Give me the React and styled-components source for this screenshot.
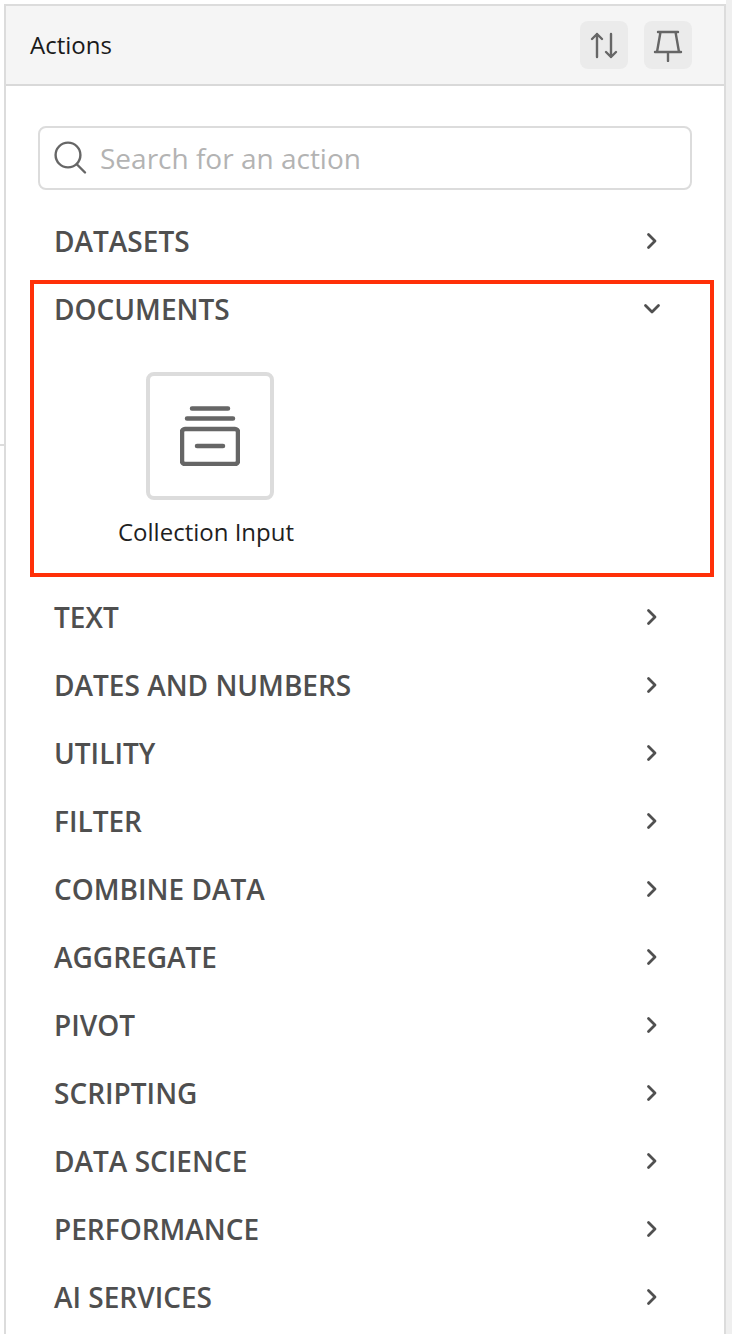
import React from 'react'
import styled, { createGlobalStyle } from 'styled-components'

const GlobalStyle = createGlobalStyle`
  html, body {
    margin: 0;
    padding: 0;
    background: #fff;
    font-family: "Open Sans", "Liberation Sans", sans-serif;
  }
`

const Page = styled.div`
  width: 732px;
  height: 1334px;
  display: flex;
  overflow: hidden;
`

const Gutter = styled.div`
  width: 4px;
  height: 444px;
  flex: none;
  border-bottom: 2px solid #dcdcdc;
`

const Panel = styled.aside`
  width: 718px;
  height: 1334px;
  margin-top: 4px;
  flex: none;
  border: 2px solid #dcdcdc;
  border-bottom: none;
  background: #fff;
`

const RightEdge = styled.div`
  flex: 1;
  background: #efefef;
`

const Header = styled.header`
  height: 78px;
  display: flex;
  align-items: center;
  padding: 0 32px 0 24px;
  background: #f5f5f5;
  border-bottom: 2px solid #d9d9d9;
`

const Title = styled.h1`
  margin: 0 0 2px;
  flex: 1;
  font-size: 24px;
  font-weight: 400;
  color: #1a1a1a;
`

const HeaderButtons = styled.div`
  display: flex;
  gap: 16px;
`

const IconButton = styled.button`
  width: 48px;
  height: 48px;
  padding: 0;
  display: flex;
  align-items: center;
  justify-content: center;
  border: none;
  border-radius: 8px;
  background: #ebebeb;
`

const Body = styled.div`
  padding-top: 40px;
`

const SearchBox = styled.label`
  height: 60px;
  margin: 0 32px;
  padding-left: 14px;
  display: flex;
  align-items: center;
  gap: 12px;
  border: 2px solid #dcdcdc;
  border-radius: 8px;
`

const SearchInput = styled.input`
  flex: 1;
  min-width: 0;
  border: none;
  outline: none;
  padding: 0;
  background: transparent;
  font-family: inherit;
  font-size: 28px;
  color: #333;

  &::placeholder {
    color: #b3b3b3;
    opacity: 1;
  }
`

const List = styled.div`
  padding-top: 17px;
`

const Row = styled.div`
  height: 68px;
  display: flex;
  align-items: center;
  justify-content: space-between;
  padding: 0 62px 0 48px;
`

const RowLabel = styled.span`
  font-size: 28px;
  font-weight: 600;
  color: #4f4f4f;
`

const Section = styled.section`
  position: relative;
  height: 308px;
`

const Highlight = styled.div`
  position: absolute;
  top: 5px;
  left: 24px;
  width: 684px;
  height: 297px;
  box-sizing: border-box;
  border: 4px solid #ff3008;
  pointer-events: none;
`

const Tile = styled.div`
  width: 176px;
  margin: 29px 0 0 112px;
  display: flex;
  flex-direction: column;
  align-items: center;
`

const TileIcon = styled.div`
  width: 128px;
  height: 128px;
  box-sizing: border-box;
  margin-left: 8px;
  display: flex;
  align-items: center;
  justify-content: center;
  border: 4px solid #dcdcdc;
  border-radius: 8px;
`

const TileLabel = styled.span`
  margin-top: 15px;
  font-size: 24px;
  line-height: 34px;
  white-space: nowrap;
  color: #1f1f1f;
`

const SortIcon = () => (
  <svg width="28" height="28" viewBox="0 0 28 28" fill="none" stroke="#666" strokeWidth="2.400" strokeLinecap="round" strokeLinejoin="round">
    <path d="M7 26V3M2 8l5-5 5 5" />
    <path d="M21 3v23M16 21l5 5 5-5" />
  </svg>
)

const PinIcon = () => (
  <svg width="30" height="34" viewBox="0 0 30 34" fill="none" stroke="#666" strokeWidth="2.400" strokeLinecap="round" strokeLinejoin="round">
    <path d="M5 4h20M7.500 4 4 24M22.500 4 26 24M2 24h26M15 24v9" />
  </svg>
)

const SearchIcon = () => (
  <svg width="34" height="36" viewBox="0 0 34 36" fill="none" stroke="#666" strokeWidth="2.400" strokeLinecap="round">
    <circle cx="14" cy="15" r="12.400" />
    <path d="M23 24.500 31 32.500" />
  </svg>
)

const Chevron = ({ open }) => (
  <svg width="20" height="20" viewBox="0 0 20 20" fill="none" stroke="#505050" strokeWidth="2.800" strokeLinecap="round" strokeLinejoin="round">
    <path d={open ? 'M3.500 6.500 10 13l6.500-6.500' : 'M6.500 3.500 13 10l-6.500 6.500'} />
  </svg>
)

const CollectionIcon = () => (
  <svg width="60" height="60" viewBox="0 0 60 60" fill="none" stroke="#666" strokeLinecap="round">
    <path d="M12 2.500h36M7 12.500h46" strokeWidth="4.500" />
    <rect x="2" y="23" width="56" height="35" rx="3" strokeWidth="4.500" />
    <path d="M17 40h26" strokeWidth="4.500" />
  </svg>
)

const before = ['DATASETS']
const after = ['TEXT', 'DATES AND NUMBERS', 'UTILITY', 'FILTER', 'COMBINE DATA', 'AGGREGATE', 'PIVOT', 'SCRIPTING', 'DATA SCIENCE', 'PERFORMANCE', 'AI SERVICES']

const CategoryRow = ({ label, open }) => (
  <Row>
    <RowLabel>{label}</RowLabel>
    <Chevron open={open} />
  </Row>
)

export default function App() {
  return (
    <Page>
      <GlobalStyle />
      <Gutter />
      <Panel>
        <Header>
          <Title>Actions</Title>
          <HeaderButtons>
            <IconButton><SortIcon /></IconButton>
            <IconButton><PinIcon /></IconButton>
          </HeaderButtons>
        </Header>
        <Body>
          <SearchBox>
            <SearchIcon />
            <SearchInput placeholder="Search for an action" />
          </SearchBox>
          <List>
            {before.map(label => <CategoryRow key={label} label={label} />)}
            <Section>
              <CategoryRow label="DOCUMENTS" open />
              <Tile>
                <TileIcon><CollectionIcon /></TileIcon>
                <TileLabel>Collection Input</TileLabel>
              </Tile>
              <Highlight />
            </Section>
            {after.map(label => <CategoryRow key={label} label={label} />)}
          </List>
        </Body>
      </Panel>
      <RightEdge />
    </Page>
  )
}
